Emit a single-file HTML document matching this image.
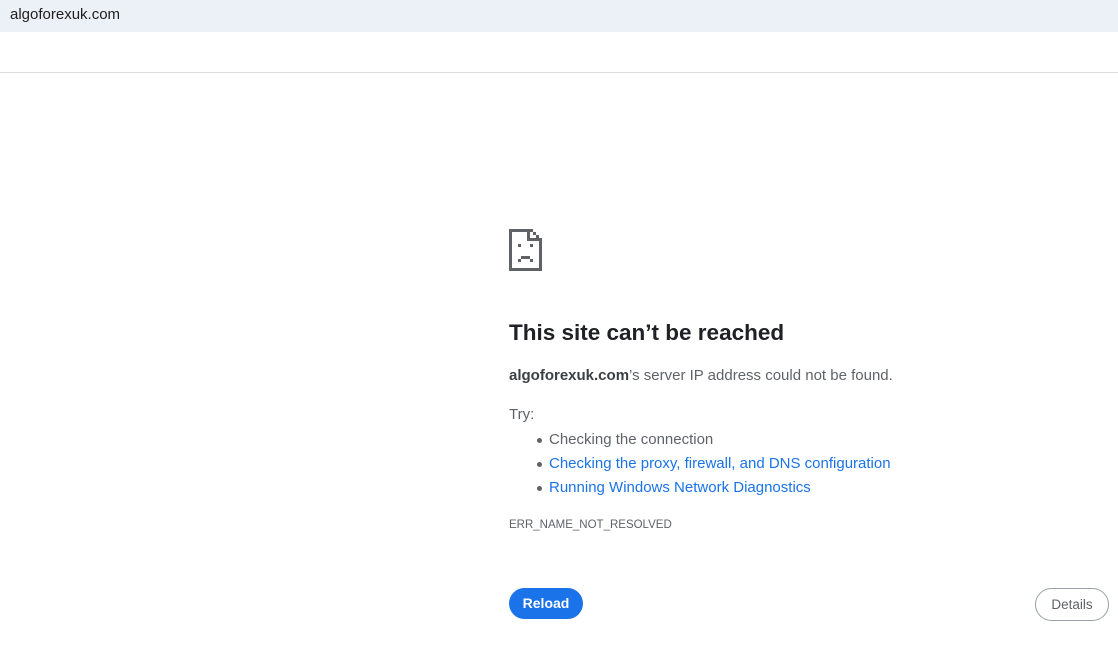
<!DOCTYPE html>
<html><head><style>
body{margin:0;width:1118px;height:645px;background:#fff;font-family:"Liberation Sans",Arial,sans-serif;position:relative;overflow:hidden;color:#5f6368}
.bar{position:absolute;left:0;top:0;width:1118px;height:32px;background:#ecf0f7}
.url{position:absolute;left:10px;top:6px;font-size:15px;color:#1f1f1f}
.line{position:absolute;left:0;top:72px;width:1118px;height:1px;background:#dadce0}
h1{position:absolute;left:509px;top:320px;margin:0;font-size:22.5px;font-weight:bold;color:#202124}
.p{position:absolute;left:509px;font-size:15px;color:#5f6368}
a{color:#1a73e8;text-decoration:none}
ul{position:absolute;left:509px;top:428px;margin:0;padding-left:40px;font-size:15px;line-height:24px;list-style:none}
li{position:relative}
li:before{content:"";position:absolute;left:-12px;top:10px;width:5px;height:5px;border-radius:50%;background:#5f6368}
.btn{position:absolute;left:509px;top:588px;width:74px;height:31px;border-radius:16px;background:#1a73e8;color:#fff;font-size:14px;font-weight:bold;text-align:center;line-height:31px}
.det{position:absolute;left:1035px;top:588px;width:74px;height:33px;border-radius:17px;border:1px solid #9aa0a6;color:#5f6368;font-size:13.5px;text-align:center;line-height:31px;box-sizing:border-box}
</style></head><body>
<div class="bar"><div class="url">algoforexuk.com</div></div>
<div class="line"></div>
<svg style="position:absolute;left:509px;top:229px" width="34" height="42" viewBox="0 0 34 42" shape-rendering="crispEdges">
<g fill="#5f6368">
<rect x="0" y="0" width="21" height="3"/>
<rect x="0" y="0" width="3" height="42"/>
<rect x="0" y="39" width="33" height="3"/>
<rect x="30" y="12" width="3" height="30"/>
<rect x="21" y="0" width="3" height="3"/><rect x="24" y="3" width="3" height="3"/><rect x="27" y="6" width="3" height="3"/><rect x="30" y="9" width="3" height="3"/>
<rect x="18" y="3" width="3" height="9"/><rect x="18" y="9" width="12" height="3"/>
<rect x="9" y="15" width="3" height="3"/><rect x="21" y="15" width="3" height="3"/>
<rect x="12" y="27" width="9" height="3"/><rect x="9" y="30" width="3" height="3"/><rect x="21" y="30" width="3" height="3"/>
</g></svg>
<h1>This site can’t be reached</h1>
<div class="p" style="top:367px"><b style="color:#3c4043">algoforexuk.com</b>’s server IP address could not be found.</div>
<div class="p" style="top:406px">Try:</div>
<ul>
<li>Checking the connection</li>
<li><a>Checking the proxy, firewall, and DNS configuration</a></li>
<li><a>Running Windows Network Diagnostics</a></li>
</ul>
<div class="p" style="top:519px;font-size:11.5px">ERR_NAME_NOT_RESOLVED</div>
<div class="btn">Reload</div>
<div class="det">Details</div>
</body></html>
